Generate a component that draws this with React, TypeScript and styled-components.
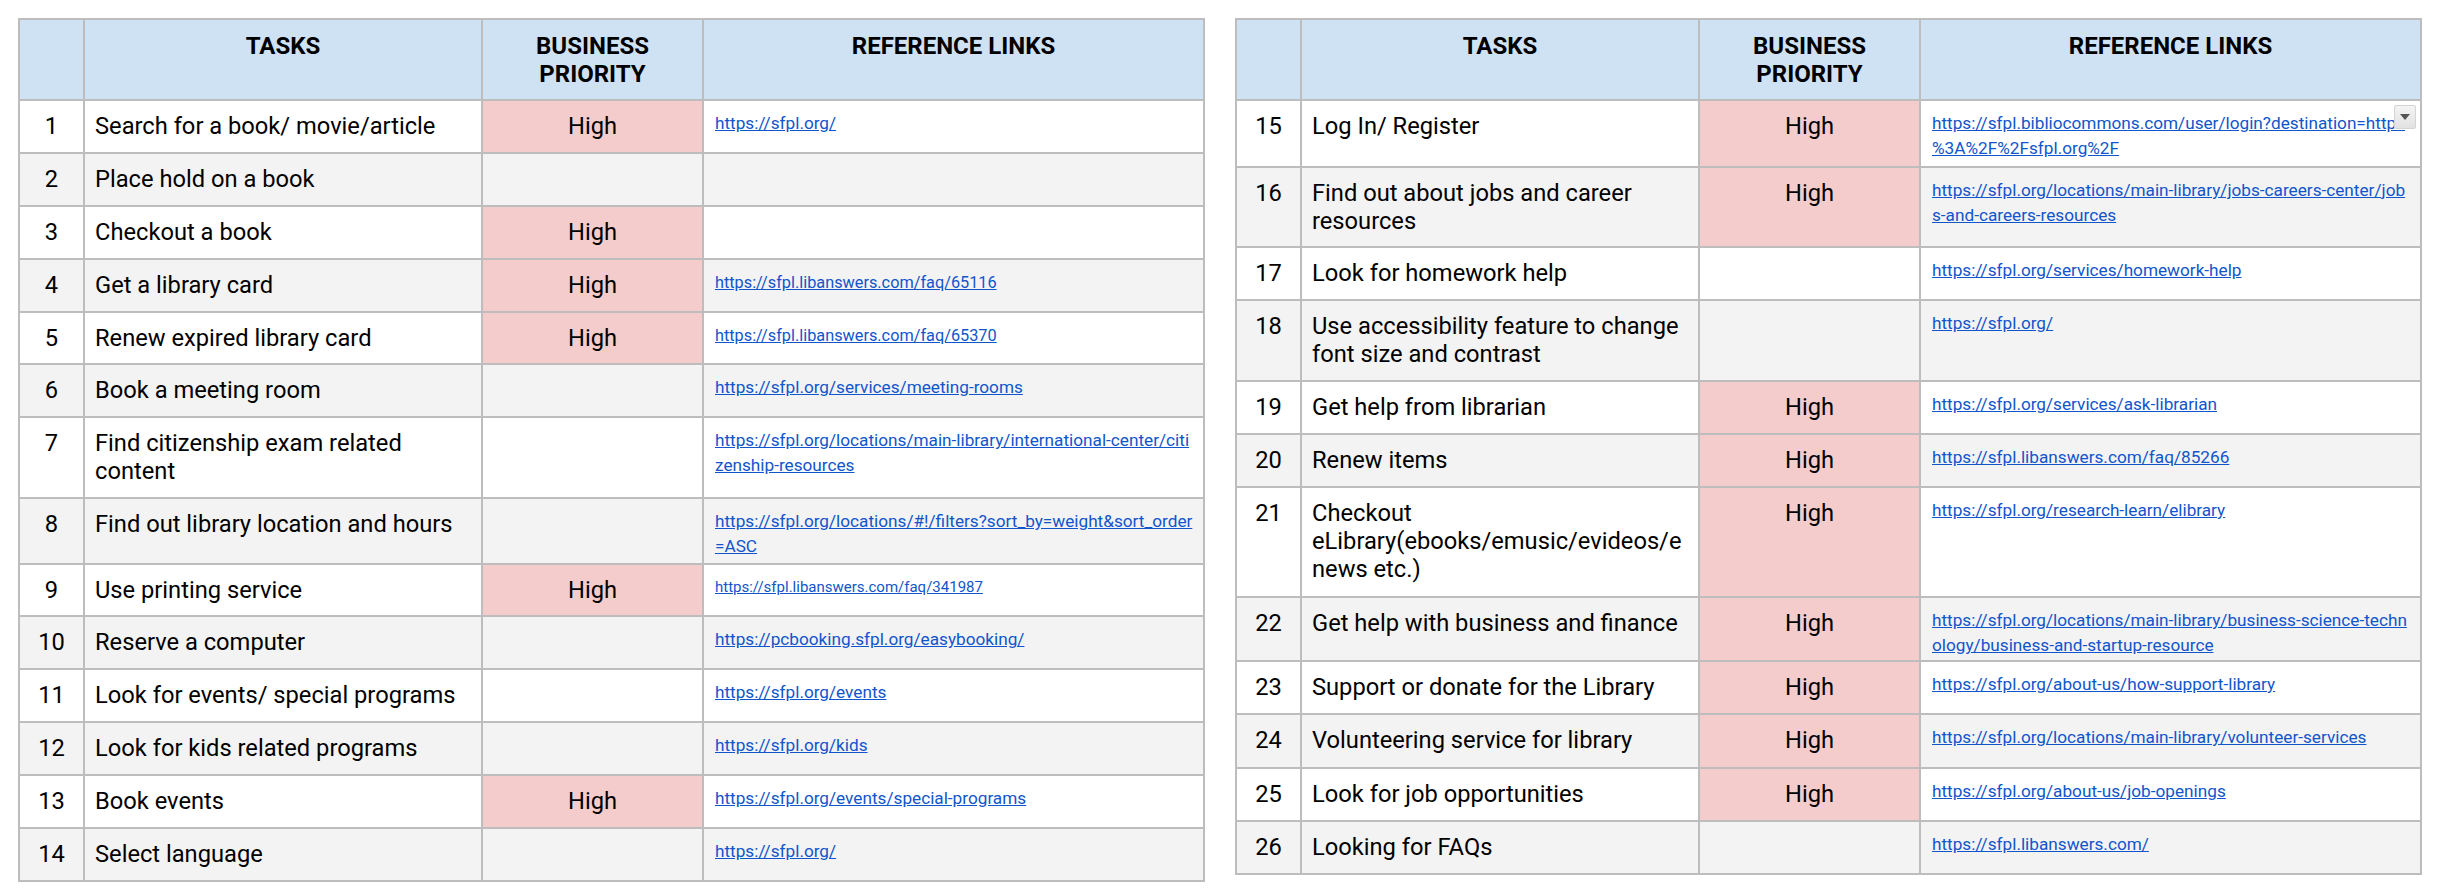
import styled, { createGlobalStyle } from 'styled-components';

const GlobalStyle = createGlobalStyle`
  html, body {
    margin: 0;
    background: #ffffff;
  }
  body {
    font-family: Roboto, "Noto Sans", Arial, sans-serif;
    color: #000000;
  }
`;

const COLS = '65px 398px 221px 1fr';
const LINE = '#bdbdbd';

interface Task {
  n: number;
  task: string;
  high?: boolean;
  links?: string[];
  linkSize?: number;
  h: number;
  filter?: boolean;
}

const leftTasks: Task[] = [
  { n: 1, task: 'Search for a book/ movie/article', high: true, links: ['https://sfpl.org/'], h: 52.9 },
  { n: 2, task: 'Place hold on a book', h: 52.9 },
  { n: 3, task: 'Checkout a book', high: true, h: 52.9 },
  { n: 4, task: 'Get a library card', high: true, links: ['https://sfpl.libanswers.com/faq/65116'], linkSize: 16.3, h: 52.9 },
  { n: 5, task: 'Renew expired library card', high: true, links: ['https://sfpl.libanswers.com/faq/65370'], linkSize: 16.3, h: 52.9 },
  { n: 6, task: 'Book a meeting room', links: ['https://sfpl.org/services/meeting-rooms'], h: 52.9 },
  {
    n: 7,
    task: 'Find citizenship exam related\ncontent',
    links: ['https://sfpl.org/locations/main-library/international-center/citi', 'zenship-resources'],
    h: 80.9,
  },
  {
    n: 8,
    task: 'Find out library location and hours',
    links: ['https://sfpl.org/locations/#!/filters?sort_by=weight&sort_order', '=ASC'],
    h: 65.3,
  },
  { n: 9, task: 'Use printing service', high: true, links: ['https://sfpl.libanswers.com/faq/341987'], linkSize: 15, h: 52.9 },
  { n: 10, task: 'Reserve a computer', links: ['https://pcbooking.sfpl.org/easybooking/'], h: 52.9 },
  { n: 11, task: 'Look for events/ special programs', links: ['https://sfpl.org/events'], h: 52.9 },
  { n: 12, task: 'Look for kids related programs', links: ['https://sfpl.org/kids'], h: 52.9 },
  { n: 13, task: 'Book events', high: true, links: ['https://sfpl.org/events/special-programs'], h: 52.9 },
  { n: 14, task: 'Select language', links: ['https://sfpl.org/'], h: 52.9 },
];

const rightTasks: Task[] = [
  {
    n: 15,
    task: 'Log In/ Register',
    high: true,
    links: ['https://sfpl.bibliocommons.com/user/login?destination=https', '%3A%2F%2Fsfpl.org%2F'],
    h: 67,
    filter: true,
  },
  {
    n: 16,
    task: 'Find out about jobs and career\nresources',
    high: true,
    links: ['https://sfpl.org/locations/main-library/jobs-careers-center/job', 's-and-careers-resources'],
    h: 80,
  },
  { n: 17, task: 'Look for homework help', links: ['https://sfpl.org/services/homework-help'], h: 53 },
  { n: 18, task: 'Use accessibility feature to change\nfont size and contrast', links: ['https://sfpl.org/'], h: 81 },
  { n: 19, task: 'Get help from librarian', high: true, links: ['https://sfpl.org/services/ask-librarian'], h: 53 },
  { n: 20, task: 'Renew items', high: true, links: ['https://sfpl.libanswers.com/faq/85266'], h: 53 },
  {
    n: 21,
    task: 'Checkout\neLibrary(ebooks/emusic/evideos/e\nnews etc.)',
    high: true,
    links: ['https://sfpl.org/research-learn/elibrary'],
    h: 110,
  },
  {
    n: 22,
    task: 'Get help with business and finance',
    high: true,
    links: ['https://sfpl.org/locations/main-library/business-science-techn', 'ology/business-and-startup-resource'],
    h: 64,
  },
  { n: 23, task: 'Support or donate for the Library', high: true, links: ['https://sfpl.org/about-us/how-support-library'], h: 53 },
  { n: 24, task: 'Volunteering service for library', high: true, links: ['https://sfpl.org/locations/main-library/volunteer-services'], h: 54 },
  { n: 25, task: 'Look for job opportunities', high: true, links: ['https://sfpl.org/about-us/job-openings'], h: 53 },
  { n: 26, task: 'Looking for FAQs', links: ['https://sfpl.libanswers.com/'], h: 53 },
];

const Page = styled.div`
  display: flex;
  align-items: flex-start;
  gap: 30px;
  padding: 18px 0 0 18px;
`;

const Sheet = styled.div`
  width: 1187px;
  box-sizing: border-box;
  border: 2px solid ${LINE};
`;

const Row = styled.div<{ $h: number; $shade?: boolean }>`
  display: grid;
  grid-template-columns: ${COLS};
  height: ${(p) => p.$h}px;
  box-sizing: border-box;
  border-top: 2px solid ${LINE};
  background: ${(p) => (p.$shade ? '#f3f3f3' : '#ffffff')};
`;

const HeadRow = styled.div`
  display: grid;
  grid-template-columns: ${COLS};
  height: 79px;
  background: #cfe2f3;
`;

const Cell = styled.div`
  position: relative;
  box-sizing: border-box;
  border-right: 2px solid ${LINE};
  padding-top: 11px;
  font-size: 23.7px;
  line-height: 28px;
  overflow: hidden;

  &:last-child {
    border-right: none;
  }
`;

const HeadCell = styled(Cell)`
  padding-top: 12px;
  font-size: 24px;
  font-weight: 700;
  text-align: center;
`;

const NumCell = styled(Cell)`
  text-align: center;
`;

const TaskCell = styled(Cell)`
  padding-left: 10px;
  white-space: pre-line;
`;

const PriorityCell = styled(Cell)<{ $high?: boolean }>`
  text-align: center;
  background: ${(p) => (p.$high ? '#f4cccc' : 'transparent')};
`;

const LinkCell = styled(Cell)`
  padding-top: 10px;
  padding-left: 11px;
  white-space: nowrap;
`;

const LinkLine = styled.a<{ $size: number }>`
  display: block;
  width: fit-content;
  font-size: ${(p) => p.$size}px;
  line-height: 25px;
  color: #1155cc;
  text-decoration: underline;
`;

const FilterButton = styled.div`
  position: absolute;
  top: 4px;
  right: 4px;
  width: 22px;
  height: 24px;
  box-sizing: border-box;
  display: flex;
  align-items: center;
  justify-content: center;
  background: linear-gradient(#f4f4f4, #e2e2e2);
  border: 1px solid #d4d4d4;
  border-radius: 2px;
`;

function TaskRow({ t, shade }: { t: Task; shade: boolean }) {
  return (
    <Row $h={t.h} $shade={shade}>
      <NumCell>{t.n}</NumCell>
      <TaskCell>{t.task}</TaskCell>
      <PriorityCell $high={t.high}>{t.high ? 'High' : ''}</PriorityCell>
      <LinkCell>
        {t.links?.map((l) => (
          <LinkLine key={l} $size={t.linkSize ?? 17.2} href="#">
            {l}
          </LinkLine>
        ))}
        {t.filter && (
          <FilterButton>
            <svg width="12" height="8" viewBox="0 0 12 8">
              <path d="M1 1h10L6 7z" fill="#555" />
            </svg>
          </FilterButton>
        )}
      </LinkCell>
    </Row>
  );
}

function TaskSheet({ rows }: { rows: Task[] }) {
  return (
    <Sheet>
      <HeadRow>
        <HeadCell />
        <HeadCell>TASKS</HeadCell>
        <HeadCell>
          BUSINESS
          <br />
          PRIORITY
        </HeadCell>
        <HeadCell>REFERENCE LINKS</HeadCell>
      </HeadRow>
      {rows.map((t, i) => (
        <TaskRow key={t.n} t={t} shade={i % 2 === 1} />
      ))}
    </Sheet>
  );
}

export default function App() {
  return (
    <>
      <GlobalStyle />
      <Page>
        <TaskSheet rows={leftTasks} />
        <TaskSheet rows={rightTasks} />
      </Page>
    </>
  );
}
